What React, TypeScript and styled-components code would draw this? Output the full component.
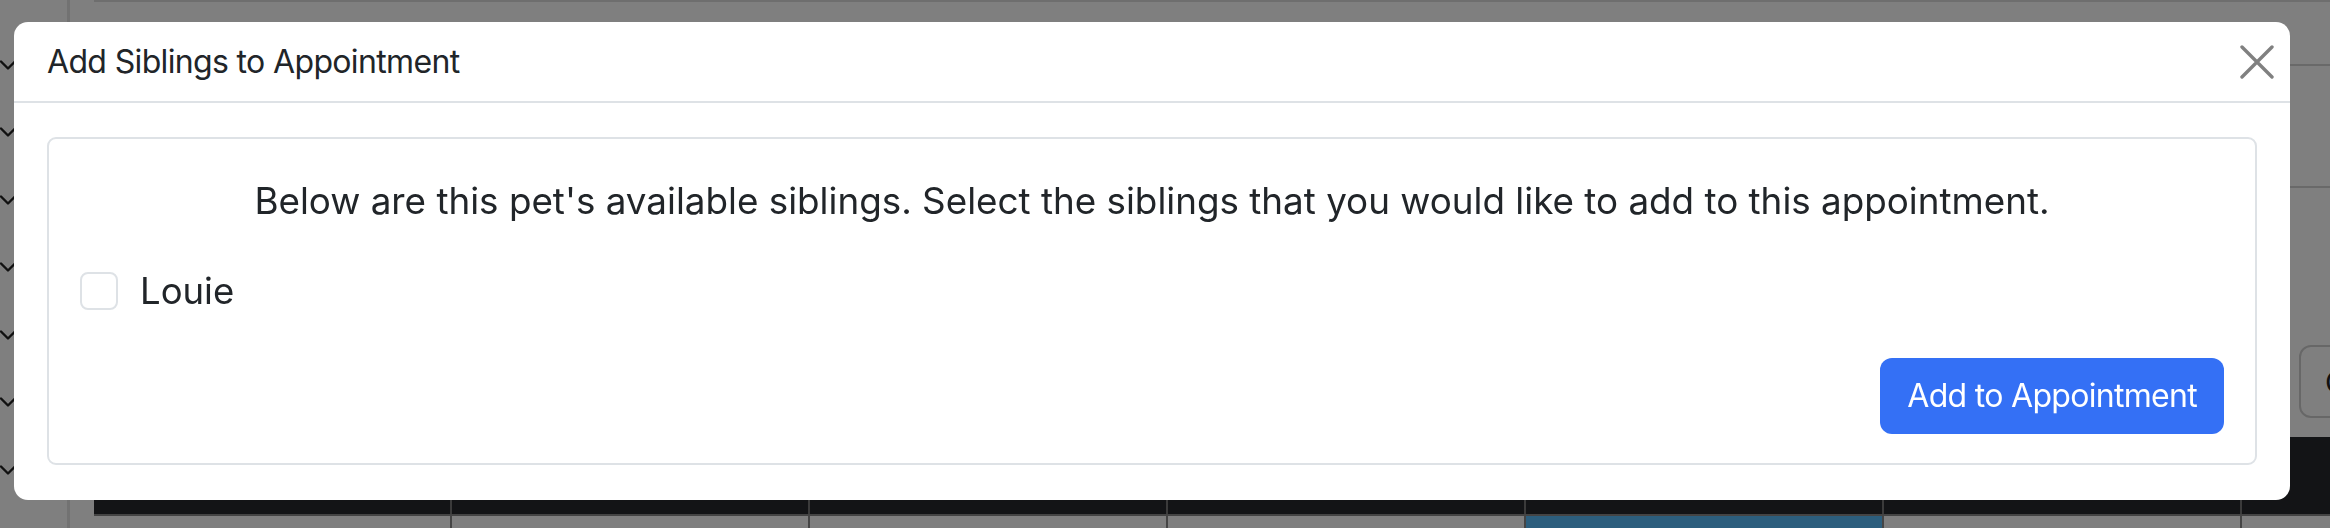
import React from "react";
import styled, { createGlobalStyle } from "styled-components";

const Global = createGlobalStyle`
  html, body {
    margin: 0;
    padding: 0;
    width: 2330px;
    height: 528px;
    overflow: hidden;
    background: #ffffff;
    font-family: "Inter", "Noto Sans", "Liberation Sans", sans-serif;
  }
  * { box-sizing: border-box; }
`;

/* ---------- Page behind the dialog ---------- */

const Page = styled.div`
  display: flex;
  width: 2330px;
  height: 528px;
  overflow: hidden;
  background: #ffffff;
`;

const Rail = styled.div`
  flex: 0 0 70px;
  height: 528px;
  border-right: 3px solid #e4e4e4;
  display: flex;
  flex-direction: column;
  padding-top: 31px;
`;

const RailItem = styled.div`
  height: 67.5px;
  display: flex;
  align-items: center;
  color: #2a2a2a;
`;

const Main = styled.div`
  flex: 1 1 auto;
  min-width: 0;
  height: 528px;
  display: flex;
  flex-direction: column;
  padding-left: 24px;
  overflow: hidden;
`;

const Band = styled.div<{ $h: number; $border?: boolean }>`
  flex: 0 0 ${(p) => p.$h}px;
  border-bottom: ${(p) => (p.$border ? "2px solid #d2d2d2" : "none")};
`;

const TopRule = styled.div`
  flex: 0 0 2px;
  background: #dcdcdc;
`;

const Toolbar = styled.div`
  flex: 0 0 249px;
  display: flex;
  align-items: flex-start;
  padding-top: 157px;
  padding-left: 2205px;
`;

const GhostButton = styled.div`
  flex: 0 0 auto;
  height: 73px;
  padding: 0 24px;
  border: 2px solid #cfcfcf;
  border-radius: 12px;
  display: flex;
  align-items: center;
  font-size: 30px;
  color: #222;
  white-space: nowrap;
`;

const TableRow = styled.div<{ $h: number; $dark?: boolean }>`
  flex: 0 0 ${(p) => p.$h}px;
  display: flex;
  background: ${(p) => (p.$dark ? "#26282c" : "#ffffff")};
  border-bottom: ${(p) => (p.$dark ? "2px solid #888888" : "none")};
`;

const Cell = styled.div<{ $dark?: boolean; $active?: boolean }>`
  flex: 0 0 358px;
  border-right: 2px solid ${(p) => (p.$dark ? "#777777" : "#8a8a8a")};
  background: ${(p) => (p.$active ? "#58bdfa" : "transparent")};
  display: flex;
  align-items: center;
  justify-content: center;
  color: #eeeeee;
  font-size: 28px;
  white-space: nowrap;
`;

/* ---------- Dialog ---------- */

const Backdrop = styled.div`
  position: fixed;
  inset: 0;
  background: rgba(0, 0, 0, 0.5);
  display: flex;
  align-items: flex-start;
  padding: 22px 40px 0 14px;
`;

const Dialog = styled.div`
  width: 2276px;
  background: #ffffff;
  border-radius: 14px;
  display: flex;
  flex-direction: column;
  color: #212529;
`;

const Header = styled.div`
  height: 81px;
  display: flex;
  align-items: center;
  justify-content: space-between;
  padding: 0 16px 0 33px;
  border-bottom: 2px solid #dee2e6;
`;

const Title = styled.h5`
  margin: 0;
  font-size: 32px;
  font-weight: 400;
  line-height: 1.5;
  letter-spacing: -0.65px;
`;

const CloseButton = styled.button`
  width: 34px;
  height: 34px;
  padding: 0;
  border: 0;
  background: transparent;
  display: flex;
  align-items: center;
  justify-content: center;
`;

const Body = styled.div`
  padding: 34px 33px 35px 33px;
`;

const Card = styled.div`
  border: 2px solid #dee2e6;
  border-radius: 9px;
  padding: 35px 31px 29px 31px;
  display: flex;
  flex-direction: column;
`;

const Lead = styled.p`
  margin: 0;
  text-align: center;
  font-size: 36.8px;
  line-height: 54px;
`;

const CheckRow = styled.label`
  margin-top: 36px;
  height: 54px;
  display: flex;
  align-items: center;
  gap: 22px;
  font-size: 36.5px;
  line-height: 54px;
`;

const CheckBox = styled.span`
  width: 38px;
  height: 38px;
  border: 2px solid #dee2e6;
  border-radius: 8px;
  background: #fff;
`;

const Actions = styled.div`
  margin-top: 40px;
  display: flex;
  justify-content: flex-end;
`;

const PrimaryButton = styled.button`
  height: 76px;
  padding: 0 27px;
  border: 0;
  border-radius: 12px;
  background: #3470f5;
  color: #ffffff;
  font-family: inherit;
  font-size: 32px;
  letter-spacing: -0.7px;
  line-height: 1;
`;

const Chevron = () => (
  <svg width="16" height="10" viewBox="0 0 16 10">
    <polyline
      points="1,1.5 8,8.5 15,1.5"
      fill="none"
      stroke="#222"
      strokeWidth="2.4"
      strokeLinecap="round"
      strokeLinejoin="round"
    />
  </svg>
);

const headers = [
  "Sunday 3/10",
  "Monday 3/11",
  "Tuesday 3/12",
  "Wednesday 3/13",
  "Thursday 3/14",
  "Friday 3/15",
  "Saturday 3/16",
];

export default function App() {
  return (
    <>
      <Global />
      <Page>
        <Rail>
          {Array.from({ length: 7 }).map((_, i) => (
            <RailItem key={i}>
              <Chevron />
            </RailItem>
          ))}
        </Rail>
        <Main>
          <TopRule />
          <Band $h={64} $border />
          <Band $h={122} $border />
          <Toolbar>
            <GhostButton>Clear</GhostButton>
          </Toolbar>
          <TableRow $h={79} $dark>
            {headers.map((h) => (
              <Cell key={h} $dark>
                {h}
              </Cell>
            ))}
          </TableRow>
          <TableRow $h={40}>
            {headers.map((h, i) => (
              <Cell key={h} $active={i === 4} />
            ))}
          </TableRow>
        </Main>
      </Page>
      <Backdrop>
        <Dialog role="dialog" aria-label="Add Siblings to Appointment">
          <Header>
            <Title>Add Siblings to Appointment</Title>
            <CloseButton aria-label="Close">
              <svg width="34" height="34" viewBox="0 0 34 34">
                <path
                  d="M2 2 L32 32 M32 2 L2 32"
                  stroke="#808080"
                  strokeWidth="3.4"
                  strokeLinecap="round"
                />
              </svg>
            </CloseButton>
          </Header>
          <Body>
            <Card>
              <Lead>
                Below are this pet's available siblings. Select the siblings
                that you would like to add to this appointment.
              </Lead>
              <CheckRow>
                <CheckBox />
                Louie
              </CheckRow>
              <Actions>
                <PrimaryButton>Add to Appointment</PrimaryButton>
              </Actions>
            </Card>
          </Body>
        </Dialog>
      </Backdrop>
    </>
  );
}
